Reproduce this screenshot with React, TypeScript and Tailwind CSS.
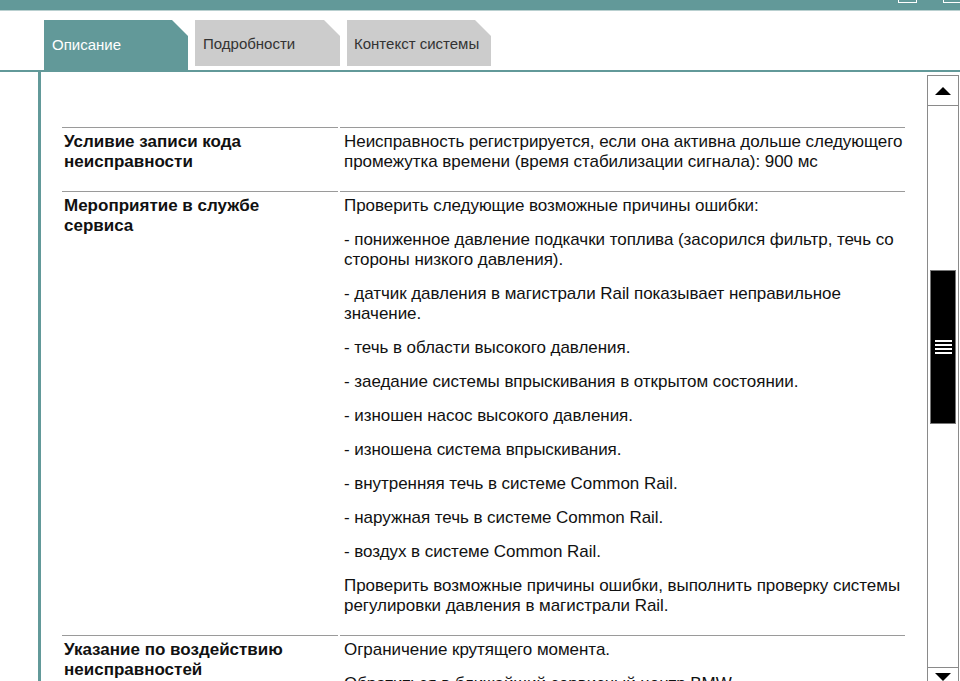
const rows = [
  {
    label: ['Усливие записи кода', 'неисправности'],
    paras: [
      'Неисправность регистрируется, если она активна дольше следующего промежутка времени (время стабилизации сигнала): 900 мс',
    ],
  },
  {
    label: ['Мероприятие в службе', 'сервиса'],
    paras: [
      'Проверить следующие возможные причины ошибки:',
      '- пониженное давление подкачки топлива (засорился фильтр, течь со стороны низкого давления).',
      '- датчик давления в магистрали Rail показывает неправильное значение.',
      '- течь в области высокого давления.',
      '- заедание системы впрыскивания в открытом состоянии.',
      '- изношен насос высокого давления.',
      '- изношена система впрыскивания.',
      '- внутренняя течь в системе Common Rail.',
      '- наружная течь в системе Common Rail.',
      '- воздух в системе Common Rail.',
      'Проверить возможные причины ошибки, выполнить проверку системы регулировки давления в магистрали Rail.',
    ],
  },
  {
    label: ['Указание по воздействию', 'неисправностей'],
    paras: ['Ограничение крутящего момента.', 'Обратиться в ближайший сервисный центр BMW.'],
  },
]

const tabClip = '[clip-path:polygon(0_0,calc(100%-16px)_0,100%_16px,100%_100%,0_100%)]'

export default function App() {
  return (
    <div className="w-[960px] h-[681px] overflow-hidden bg-white flex flex-col font-['Liberation_Sans',Arial,sans-serif]">
      {/* top bar */}
      <div className="h-[11px] shrink-0 bg-[#629999] border-b border-[#b9d0d0] flex justify-end items-start">
        <div className="w-[19px] h-[3px] border-x border-b border-white mr-[26px]" />
        <div className="w-[17px] h-[3px] border-l border-b border-white" />
      </div>

      {/* tabs */}
      <div className="h-[59px] shrink-0 flex items-start pt-[9px] pl-[44px] gap-[7px]">
        <div className={`${tabClip} w-[144px] h-[50px] bg-[#629999] text-white text-[15px] pl-[8px] pt-[14px]`}>
          Описание
        </div>
        <div className={`${tabClip} w-[145px] h-[46px] bg-[#cccccc] text-[#333] text-[15px] pl-[8px] pt-[13px]`}>
          Подробности
        </div>
        <div className={`${tabClip} w-[144px] h-[46px] bg-[#cccccc] text-[#333] text-[15px] pl-[7px] pt-[13px]`}>
          Контекст системы
        </div>
      </div>
      <div className="h-[2px] shrink-0 bg-[#629999]" />

      {/* body */}
      <div className="flex flex-1 min-h-0">
        <div className="w-[38px] shrink-0" />
        <div className="w-[3px] shrink-0 bg-[#629999]" />
        <div className="flex-1 min-w-0 overflow-hidden pl-[21px] pr-[22px] pt-[55px] text-[17px] leading-[20px] text-[#111]">
          <div className="grid grid-cols-[276px_1fr] gap-x-[2px]">
            {rows.map((r, i) => (
              <div key={i} className="contents">
                <div className="border-t border-[#9a9a9a] pt-[4px] pl-[2px] font-bold">
                  {r.label.map((l, j) => (
                    <div key={j}>{l}</div>
                  ))}
                </div>
                <div className="border-t border-[#9a9a9a] pt-[4px] pl-[4px] pb-[5px]">
                  {r.paras.map((p, j) => (
                    <p key={j} className="mb-[14px] mr-[-10px] tracking-[-0.05px]">
                      {p}
                    </p>
                  ))}
                </div>
              </div>
            ))}
          </div>
        </div>

        {/* scrollbar */}
        <div className="w-[33px] shrink-0 pt-[3px] pr-[1px]">
          <div className="h-full border-x border-t border-[#8a8a8a] flex flex-col">
            <div className="h-[30px] shrink-0 border-b border-[#8a8a8a] flex items-center justify-center">
              <div className="w-0 h-0 border-l-[8px] border-r-[8px] border-b-[8px] border-l-transparent border-r-transparent border-b-black" />
            </div>
            <div className="h-[164px] shrink-0" />
            <div className="h-[154px] shrink-0 mx-[2px] bg-black border border-[#777] flex flex-col items-center justify-center gap-[2px]">
              <div className="w-[17px] h-[2px] bg-white" />
              <div className="w-[17px] h-[2px] bg-white" />
              <div className="w-[17px] h-[2px] bg-white" />
              <div className="w-[17px] h-[2px] bg-white" />
            </div>
            <div className="flex-1" />
            <div className="h-[14px] shrink-0 border-t border-[#8a8a8a] flex justify-center pt-[5px]">
              <div className="w-0 h-0 border-l-[8px] border-r-[8px] border-t-[8px] border-l-transparent border-r-transparent border-t-black" />
            </div>
          </div>
        </div>
      </div>
    </div>
  )
}
